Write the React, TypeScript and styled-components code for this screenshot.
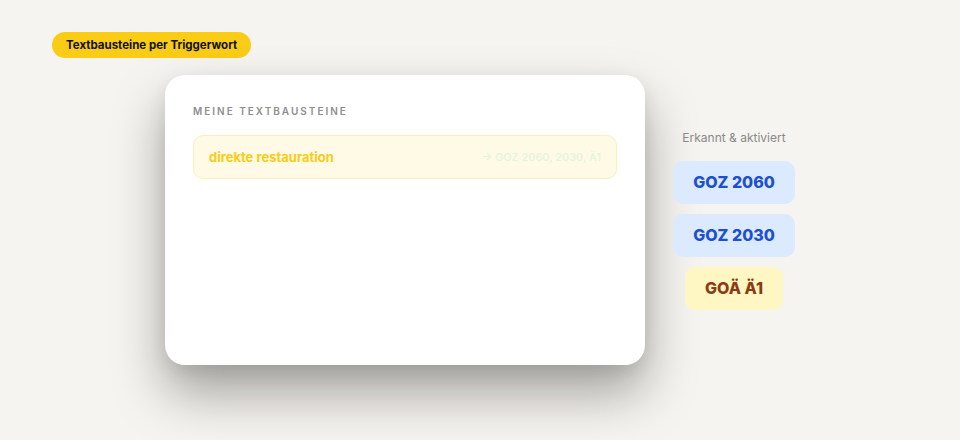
import styled, { createGlobalStyle } from "styled-components";

const GlobalStyle = createGlobalStyle`
  html, body {
    margin: 0;
    padding: 0;
    background: #f5f4f0;
    font-family: Inter, "Noto Sans", "Liberation Sans", sans-serif;
  }
`;

const Page = styled.div`
  width: 960px;
  height: 440px;
  box-sizing: border-box;
  padding: 32px 0 0 52px;
  overflow: hidden;
`;

const Badge = styled.div`
  display: inline-flex;
  align-items: center;
  height: 26px;
  padding: 0 14px;
  border-radius: 999px;
  background: #facc15;
  color: #111;
  font-size: 11.5px;
  font-weight: 700;
`;

const Stage = styled.div`
  display: flex;
  align-items: center;
  gap: 28px;
  margin: 17px 0 0 113px;
`;

const Card = styled.div`
  width: 480px;
  height: 290px;
  box-sizing: border-box;
  padding: 30px 28px;
  background: #fff;
  border-radius: 20px;
  box-shadow: 0 28px 52px rgba(0, 0, 0, 0.34), 0 6px 18px rgba(0, 0, 0, 0.08);
`;

const Heading = styled.div`
  font-size: 10px;
  font-weight: 600;
  letter-spacing: 2px;
  color: #8e8e8e;
  margin-bottom: 18px;
`;

const SnippetRow = styled.div`
  display: flex;
  align-items: center;
  justify-content: space-between;
  height: 44px;
  box-sizing: border-box;
  padding: 0 15px;
  background: #fefae6;
  border: 1px solid #fbf0b8;
  border-radius: 10px;
`;

const Trigger = styled.span`
  font-size: 13px;
  font-weight: 700;
  color: #facc15;
`;

const Codes = styled.span`
  font-size: 11px;
  font-weight: 500;
  color: #e4f5dc;
`;

const Side = styled.div`
  display: flex;
  flex-direction: column;
  align-items: center;
  gap: 10px;
  width: 122px;
`;

const SideLabel = styled.div`
  font-size: 12px;
  color: #8a8a8a;
  white-space: nowrap;
  margin-bottom: 5px;
  transform: translateY(-1px);
`;

const CodePill = styled.div<{ $tone: "blue" | "yellow" }>`
  display: flex;
  align-items: center;
  justify-content: center;
  height: 43px;
  padding: 0 20px;
  border-radius: 10px;
  font-size: 16px;
  font-weight: 800;
  background: ${(p) => (p.$tone === "blue" ? "#dbeafe" : "#fef6c3")};
  color: ${(p) => (p.$tone === "blue" ? "#1e4fd0" : "#8a3b12")};
  width: ${(p) => (p.$tone === "blue" ? "122px" : "auto")};
  box-sizing: border-box;
`;

const codes: { label: string; tone: "blue" | "yellow" }[] = [
  { label: "GOZ 2060", tone: "blue" },
  { label: "GOZ 2030", tone: "blue" },
  { label: "GOÄ Ä1", tone: "yellow" },
];

export default function App() {
  return (
    <>
      <GlobalStyle />
      <Page>
        <Badge>Textbausteine per Triggerwort</Badge>
        <Stage>
          <Card>
            <Heading>MEINE TEXTBAUSTEINE</Heading>
            <SnippetRow>
              <Trigger>direkte restauration</Trigger>
              <Codes>→ GOZ 2060, 2030, Ä1</Codes>
            </SnippetRow>
          </Card>
          <Side>
            <SideLabel>Erkannt &amp; aktiviert</SideLabel>
            {codes.map((c) => (
              <CodePill key={c.label} $tone={c.tone}>
                {c.label}
              </CodePill>
            ))}
          </Side>
        </Stage>
      </Page>
    </>
  );
}
